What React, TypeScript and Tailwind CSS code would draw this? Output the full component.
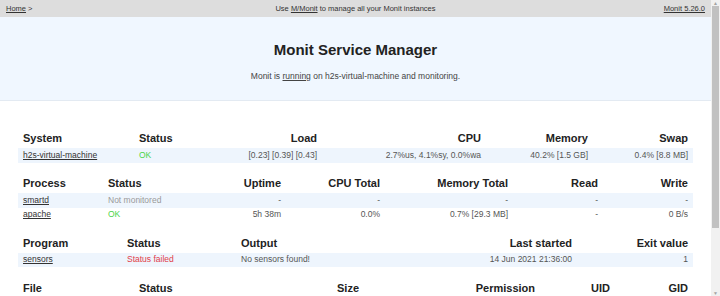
const font = { fontFamily: '"Liberation Sans", Arial, sans-serif' };

type Cell = { text: string; align?: "l" | "r"; link?: boolean; color?: string };

function Table({ cols, head, rows }: { cols: string; head: Cell[]; rows: Cell[][] }) {
    return (
        <div className="mx-[18px]">
            <div className={`grid h-[19px] items-center text-[11px] font-bold text-[#222] ${cols}`}>
                {head.map((h, i) => (
                    <div key={i} className={`px-[5px] whitespace-nowrap ${h.align === "r" ? "text-right" : "text-left"}`}>
                        {h.text}
                    </div>
                ))}
            </div>
            {rows.map((r, ri) => (
                <div
                    key={ri}
                    className={`grid h-[14.5px] items-center text-[8.5px] text-[#555] ${cols} ${ri % 2 === 0 ? "bg-[#eef5fd]" : "bg-white"}`}
                >
                    {r.map((c, ci) => (
                        <div
                            key={ci}
                            className={`px-[5px] whitespace-nowrap ${c.align === "r" ? "text-right" : "text-left"} ${c.link ? "underline text-[#333]" : ""} ${c.color ?? ""}`}
                        >
                            {c.text}
                        </div>
                    ))}
                </div>
            ))}
        </div>
    );
}

function Scrollbar() {
    return (
        <div className="flex w-[9px] flex-col bg-[#f1f1f1]">
            <div className="flex h-[6px] items-center justify-center text-[5px] leading-none text-[#a3a3a3]">▲</div>
            <div className="mx-[1px] h-[222px] bg-[#c1c1c1]" />
            <div className="flex-1" />
            <div className="flex h-[6px] items-center justify-center text-[5px] leading-none text-[#a3a3a3]">▼</div>
        </div>
    );
}

export default function App() {
    return (
        <div className="flex h-[296px] w-[720px] overflow-hidden bg-white" style={font}>
            <div className="flex-1 min-w-0">
                <div className="flex h-[17px] items-center justify-between bg-[#dddddd] px-[6px] text-[7.5px] text-[#333]">
                    <div className="w-[120px]">
                        <span className="underline">Home</span> &gt;
                    </div>
                    <div>
                        Use <span className="underline">M/Monit</span> to manage all your Monit instances
                    </div>
                    <div className="w-[120px] text-right">
                        <span className="underline">Monit 5.26.0</span>
                    </div>
                </div>

                <div className="flex h-[84px] flex-col items-center border-b border-[#e3eaf2] bg-[#f0f7ff]">
                    <h1 className="mt-[23px] text-[15px] font-bold leading-[20px] text-[#222]">Monit Service Manager</h1>
                    <p className="mt-[10px] text-[8.5px] text-[#444]">
                        Monit is <span className="underline">running</span> on h2s-virtual-machine and monitoring.
                    </p>
                </div>

                <div className="flex flex-col gap-[11.5px] pt-[28px]">
                    <Table
                        cols="grid-cols-[116px_66px_122px_164px_107px_100px]"
                        head={[
                            { text: "System" },
                            { text: "Status" },
                            { text: "Load", align: "r" },
                            { text: "CPU", align: "r" },
                            { text: "Memory", align: "r" },
                            { text: "Swap", align: "r" },
                        ]}
                        rows={[
                            [
                                { text: "h2s-virtual-machine", link: true },
                                { text: "OK", color: "text-[#4ad44a]" },
                                { text: "[0.23] [0.39] [0.43]", align: "r" },
                                { text: "2.7%us, 4.1%sy, 0.0%wa", align: "r" },
                                { text: "40.2% [1.5 GB]", align: "r" },
                                { text: "0.4% [8.8 MB]", align: "r" },
                            ],
                        ]}
                    />
                    <Table
                        cols="grid-cols-[85px_97px_86px_99px_128px_90px_90px]"
                        head={[
                            { text: "Process" },
                            { text: "Status" },
                            { text: "Uptime", align: "r" },
                            { text: "CPU Total", align: "r" },
                            { text: "Memory Total", align: "r" },
                            { text: "Read", align: "r" },
                            { text: "Write", align: "r" },
                        ]}
                        rows={[
                            [
                                { text: "smartd", link: true },
                                { text: "Not monitored", color: "text-[#9a9a9a]" },
                                { text: "-", align: "r" },
                                { text: "-", align: "r" },
                                { text: "-", align: "r" },
                                { text: "-", align: "r" },
                                { text: "-", align: "r" },
                            ],
                            [
                                { text: "apache", link: true },
                                { text: "OK", color: "text-[#4ad44a]" },
                                { text: "5h 38m", align: "r" },
                                { text: "0.0%", align: "r" },
                                { text: "0.7% [29.3 MB]", align: "r" },
                                { text: "-", align: "r" },
                                { text: "0 B/s", align: "r" },
                            ],
                        ]}
                    />
                    <Table
                        cols="grid-cols-[104px_114px_164px_177px_116px]"
                        head={[
                            { text: "Program" },
                            { text: "Status" },
                            { text: "Output" },
                            { text: "Last started", align: "r" },
                            { text: "Exit value", align: "r" },
                        ]}
                        rows={[
                            [
                                { text: "sensors", link: true },
                                { text: "Status failed", color: "text-[#e0404a]" },
                                { text: "No sensors found!" },
                                { text: "14 Jun 2021 21:36:00", align: "r" },
                                { text: "1", align: "r" },
                            ],
                        ]}
                    />
                    <Table
                        cols="grid-cols-[116px_116px_114px_176px_75px_78px]"
                        head={[
                            { text: "File" },
                            { text: "Status" },
                            { text: "Size", align: "r" },
                            { text: "Permission", align: "r" },
                            { text: "UID", align: "r" },
                            { text: "GID", align: "r" },
                        ]}
                        rows={[]}
                    />
                </div>
            </div>
            <Scrollbar />
        </div>
    );
}
